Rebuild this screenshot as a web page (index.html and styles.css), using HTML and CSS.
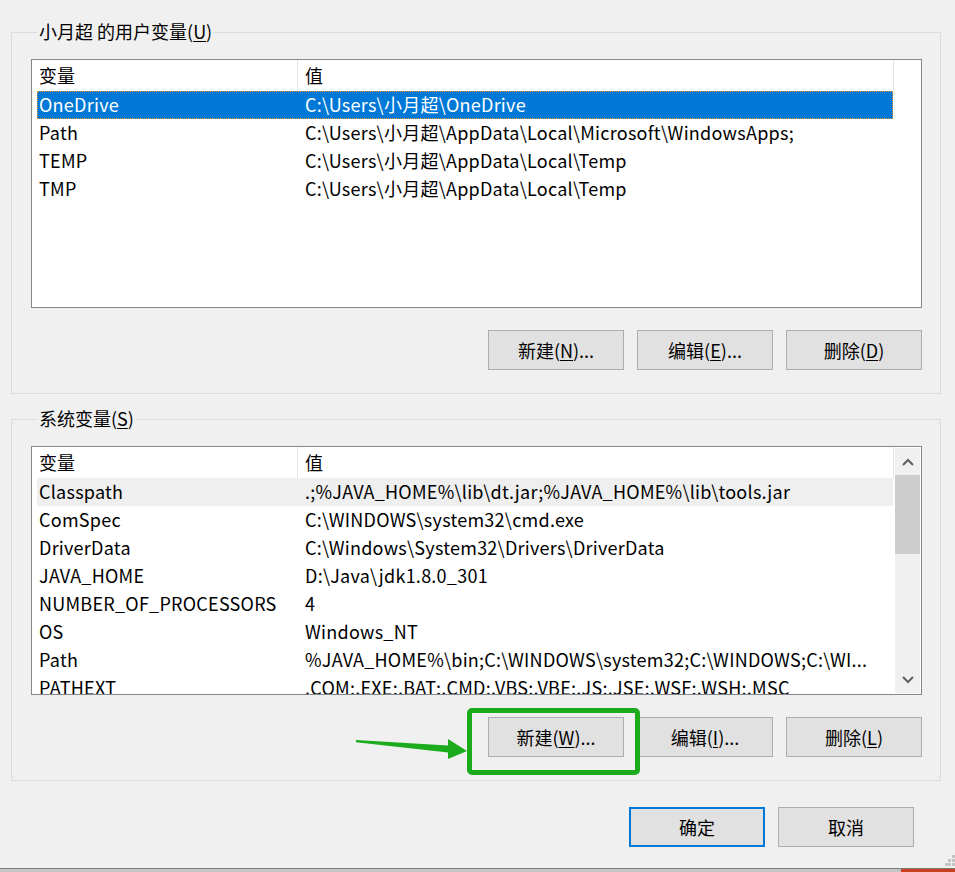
FILE: index.html
```html
<!DOCTYPE html>
<html lang="zh-CN">
<head>
<meta charset="utf-8">
<title>环境变量</title>
<link rel="stylesheet" href="styles.css">
</head>
<body>
<div class="dialog">
  <fieldset class="group">
    <legend>小月超 的用户变量(<u>U</u>)</legend>
    <div class="listbox">
      <div class="lv-body">
        <div class="lv-header"><div class="h-name">变量</div><div class="h-value">值</div></div>
        <div class="lv-row selected"><span class="c-name">OneDrive</span><span class="c-value">C:\Users\小月超\OneDrive</span></div>
        <div class="lv-row"><span class="c-name">Path</span><span class="c-value">C:\Users\小月超\AppData\Local\Microsoft\WindowsApps;</span></div>
        <div class="lv-row"><span class="c-name">TEMP</span><span class="c-value">C:\Users\小月超\AppData\Local\Temp</span></div>
        <div class="lv-row"><span class="c-name">TMP</span><span class="c-value">C:\Users\小月超\AppData\Local\Temp</span></div>
      </div>
    </div>
    <div class="btn-row">
      <button class="btn">新建(<u>N</u>)...</button>
      <button class="btn">编辑(<u>E</u>)...</button>
      <button class="btn">删除(<u>D</u>)</button>
    </div>
  </fieldset>

  <fieldset class="group group-sys">
    <legend>系统变量(<u>S</u>)</legend>
    <div class="listbox">
      <div class="lv-body">
        <div class="lv-header"><div class="h-name">变量</div><div class="h-value">值</div></div>
        <div class="lv-row hover"><span class="c-name">Classpath</span><span class="c-value">.;%JAVA_HOME%\lib\dt.jar;%JAVA_HOME%\lib\tools.jar</span></div>
        <div class="lv-row"><span class="c-name">ComSpec</span><span class="c-value">C:\WINDOWS\system32\cmd.exe</span></div>
        <div class="lv-row"><span class="c-name">DriverData</span><span class="c-value">C:\Windows\System32\Drivers\DriverData</span></div>
        <div class="lv-row"><span class="c-name">JAVA_HOME</span><span class="c-value">D:\Java\jdk1.8.0_301</span></div>
        <div class="lv-row"><span class="c-name">NUMBER_OF_PROCESSORS</span><span class="c-value">4</span></div>
        <div class="lv-row"><span class="c-name">OS</span><span class="c-value">Windows_NT</span></div>
        <div class="lv-row"><span class="c-name">Path</span><span class="c-value">%JAVA_HOME%\bin;C:\WINDOWS\system32;C:\WINDOWS;C:\WI...</span></div>
        <div class="lv-row"><span class="c-name">PATHEXT</span><span class="c-value">.COM;.EXE;.BAT;.CMD;.VBS;.VBE;.JS;.JSE;.WSF;.WSH;.MSC</span></div>
      </div>
      <div class="scrollbar">
        <div class="sb-arrow"><svg width="12" height="8" viewBox="0 0 12 8"><path d="M1 7 L6 2 L11 7" fill="none" stroke="#606060" stroke-width="2"/></svg></div>
        <div class="sb-track"><div class="sb-thumb"></div></div>
        <div class="sb-arrow"><svg width="12" height="8" viewBox="0 0 12 8"><path d="M1 1 L6 6 L11 1" fill="none" stroke="#606060" stroke-width="2"/></svg></div>
      </div>
    </div>
    <div class="btn-row">
      <button class="btn">新建(<u>W</u>)...</button>
      <button class="btn">编辑(<u>I</u>)...</button>
      <button class="btn">删除(<u>L</u>)</button>
    </div>
  </fieldset>

  <div class="footer">
    <button class="btn btn-default">确定</button>
    <button class="btn">取消</button>
  </div>
</div>

<div class="taskbar-edge"><div class="red-strip"></div></div>

<div class="highlight-box"></div>
<svg class="arrow" width="125" height="30" viewBox="350 732 125 30">
  <polygon points="356,740 448,745.5 448,739 467,751 448,759 448,752.5 356,742.2" fill="#1cab1c"/>
</svg>
<svg class="grip" width="12" height="12" viewBox="0 0 12 12">
  <rect x="7" y="0" width="3" height="3" fill="#c4c4c4"/>
  <rect x="3" y="4" width="3" height="3" fill="#c4c4c4"/>
  <rect x="7" y="4" width="3" height="3" fill="#c4c4c4"/>
  <rect x="0" y="8" width="3" height="3" fill="#c4c4c4"/>
  <rect x="3" y="8" width="3" height="3" fill="#c4c4c4"/>
  <rect x="7" y="8" width="3" height="3" fill="#c4c4c4"/>
</svg>
</body>
</html>
```
FILE: styles.css
```css
html, body {
  margin: 0;
  padding: 0;
}
body {
  background: #f0f0f0;
  width: 955px;
  height: 872px;
  overflow: hidden;
  position: relative;
  font-family: "Noto Sans CJK SC", "Noto Sans", sans-serif;
  font-size: 18px;
  color: #000;
}
.dialog {
  padding: 21px 14px 0 11px;
}
.group {
  margin: 0;
  padding: 16px 18px 23px 19px;
  border: 1px solid #dcdcdc;
  min-width: 0;
}
.group legend {
  margin-left: 6px;
  padding: 0 2px;
  line-height: 21px;
  height: 22px;
  font-size: 18px;
}
.group-sys {
  margin-top: 14px;
}
u {
  text-decoration: underline;
  text-underline-offset: 2px;
  text-decoration-thickness: 1px;
}
.listbox {
  height: 247px;
  border: 1px solid #828790;
  background: #fff;
  display: flex;
  overflow: hidden;
}
.lv-body {
  flex: 1;
  min-width: 0;
  overflow: hidden;
}
.lv-header {
  display: flex;
  height: 31px;
  width: 862px;
}
.h-name, .h-value {
  box-sizing: border-box;
  height: 31px;
  line-height: 30px;
  padding-left: 7px;
  border-right: 1px solid #e5e5e5;
}
.h-name { width: 266px; }
.h-value { width: 596px; padding-left: 7px; }
.lv-row {
  display: flex;
  height: 28px;
  line-height: 27px;
  margin-left: 5px;
  width: 856px;
  box-sizing: border-box;
  white-space: nowrap;
  letter-spacing: 0.25px;
}
.lv-row.selected {
  background: #0078d7;
  color: #fff;
  outline: 1px dotted #f0962d;
  outline-offset: -1px;
}
.lv-row.hover {
  background: #efefef;
}
.c-name {
  width: 268px;
  padding-left: 2px;
  box-sizing: border-box;
  flex: none;
}
.c-value {
  flex: 1;
  min-width: 0;
  overflow: hidden;
  padding-right: 10px;
}
.scrollbar {
  width: 25px;
  margin: 1px 1px 1px 0;
  background: #f0f0f0;
  display: flex;
  flex-direction: column;
}
.sb-arrow {
  height: 27px;
  display: flex;
  align-items: center;
  justify-content: center;
}
.sb-track {
  flex: 1;
}
.sb-thumb {
  height: 79px;
  background: #cdcdcd;
}
.btn-row {
  display: flex;
  justify-content: flex-end;
  gap: 13px;
  margin-top: 22px;
}
.btn {
  width: 136px;
  height: 40px;
  box-sizing: border-box;
  border: 1px solid #adadad;
  background: #e1e1e1;
  font-family: "Noto Sans CJK SC", "Noto Sans", sans-serif;
  font-size: 18px;
  color: #000;
  padding: 0;
  margin: 0;
}
.btn-default {
  border: 2px solid #0078d7;
}
.footer {
  display: flex;
  justify-content: flex-end;
  gap: 13px;
  margin-top: 26px;
  padding-right: 27px;
}
.taskbar-edge {
  position: absolute;
  left: 0;
  bottom: 0;
  width: 955px;
  height: 4px;
  border-top: 1px solid #7a7a7a;
  box-sizing: border-box;
  background: #c6c6c6;
}
.red-strip {
  position: absolute;
  right: 0;
  top: 0;
  width: 54px;
  height: 3px;
  background: #c8401e;
}
.highlight-box {
  position: absolute;
  left: 467px;
  top: 708px;
  width: 173px;
  height: 67px;
  box-sizing: border-box;
  border: 5px solid #1cab1c;
  border-radius: 5px;
}
.arrow {
  position: absolute;
  left: 350px;
  top: 732px;
}
.grip {
  position: absolute;
  left: 945px;
  top: 855px;
}
```
